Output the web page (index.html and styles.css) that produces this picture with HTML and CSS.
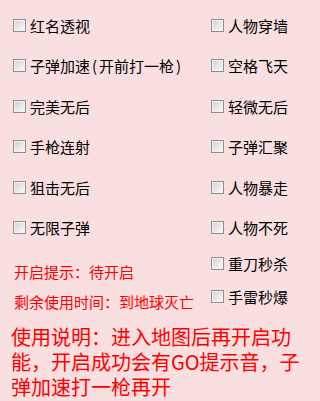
FILE: index.html
```html
<!DOCTYPE html>
<html lang="zh-CN">
<head>
<meta charset="utf-8">
<title>设置</title>
<link rel="stylesheet" href="styles.css">
</head>
<body>
<div class="panel">
  <div class="options">
    <div class="col col-left">
      <label class="opt"><input type="checkbox"><span>红名透视</span></label>
      <label class="opt"><input type="checkbox"><span>子弹加速<span class="paren">(</span>开前打一枪<span class="paren">)</span></span></label>
      <label class="opt"><input type="checkbox"><span>完美无后</span></label>
      <label class="opt"><input type="checkbox"><span>手枪连射</span></label>
      <label class="opt"><input type="checkbox"><span>狙击无后</span></label>
      <label class="opt"><input type="checkbox"><span>无限子弹</span></label>
      <div class="status status-1">开启提示：待开启</div>
      <div class="status status-2">剩余使用时间：到地球灭亡</div>
    </div>
    <div class="col col-right">
      <label class="opt"><input type="checkbox"><span>人物穿墙</span></label>
      <label class="opt"><input type="checkbox"><span>空格飞天</span></label>
      <label class="opt"><input type="checkbox"><span>轻微无后</span></label>
      <label class="opt"><input type="checkbox"><span>子弹汇聚</span></label>
      <label class="opt"><input type="checkbox"><span>人物暴走</span></label>
      <label class="opt"><input type="checkbox"><span>人物不死</span></label>
      <label class="opt opt-7"><input type="checkbox"><span>重刀秒杀</span></label>
      <label class="opt opt-8"><input type="checkbox"><span>手雷秒爆</span></label>
    </div>
  </div>
  <p class="note">使用说明：进入地图后再开启功能，开启成功会有GO提示音，子弹加速打一枪再开</p>
</div>
</body>
</html>
```

FILE: styles.css
```css
html, body {
  margin: 0;
  padding: 0;
  background: #fadfe0;
}

body {
  width: 314px;
  height: 401px;
  overflow: hidden;
  font-family: "Noto Sans CJK SC", "Noto Sans", sans-serif;
  color: #000;
}

.panel {
  padding-top: 19px;
}

.options {
  display: flex;
}

.col {
  display: flex;
  flex-direction: column;
}

.col-left {
  width: 198px;
  padding-left: 13px;
}

.opt {
  display: flex;
  align-items: center;
  height: 13px;
  margin-bottom: 27.4px;
  font-size: 15px;
  line-height: 13px;
  white-space: nowrap;
}

.opt > span {
  margin-left: 4px;
}

.opt .paren {
  padding: 0 2px;
}

.opt input {
  appearance: none;
  -webkit-appearance: none;
  box-sizing: border-box;
  width: 13px;
  height: 13px;
  margin: 0;
  flex: none;
  border: 1px solid #8e8f8f;
  background: linear-gradient(135deg, #cfcfcf 0%, #e6e6e6 50%, #fbfbfb 100%);
  box-shadow: inset 0 0 0 1px #f3f3f3;
}

.col-left .opt:nth-child(6) {
  margin-bottom: 0;
}

.col-right .opt:nth-child(6) {
  margin-bottom: 23px;
}

.col-right .opt-7 {
  margin-bottom: 20px;
}

.col-right .opt-8 {
  margin-bottom: 0;
}

.status {
  color: #ff0000;
  font-size: 15px;
  line-height: 20px;
  margin-left: 1px;
  white-space: nowrap;
}

.status-1 {
  margin-top: 28px;
}

.status-2 {
  margin-top: 10px;
}

.note {
  margin: 12px 0 0 11px;
  width: 296px;
  color: #ff0000;
  font-size: 20px;
  line-height: 25px;
}
```
